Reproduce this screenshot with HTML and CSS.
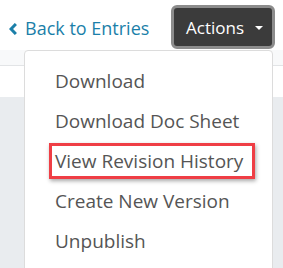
FILE: index.html
```html
<!DOCTYPE html>
<html lang="en">
  <head>
    <meta charset="UTF-8" />
    <meta name="viewport" content="width=device-width, initial-scale=1.0" />
    <title>Entry Actions</title>
    <link rel="stylesheet" href="styles.css">
  </head>
  <body>
    <header class="toolbar">
      <a href="#" class="back-link">
        <svg class="chevron" width="8" height="12" viewBox="0 0 8 12"><path d="M6.9 1 L2 6 L6.9 11" fill="none" stroke="currentColor" stroke-width="3"/></svg>
        Back to Entries
      </a>
      <div class="dropdown">
        <button class="actions-btn">Actions <span class="caret"></span></button>
        <ul class="menu">
          <li><a href="#">Download</a></li>
          <li><a href="#">Download Doc Sheet</a></li>
          <li><a href="#" class="highlight">View Revision History</a></li>
          <li><a href="#">Create New Version</a></li>
          <li><a href="#">Unpublish</a></li>
        </ul>
      </div>
    </header>

    <main>
      <div class="card-head"></div>
      <div class="card-body"></div>
      <div class="content"></div>
    </main>
  </body>
</html>
```

FILE: styles.css
```css
* {
  margin: 0;
  padding: 0;
  box-sizing: border-box;
}

body {
  font-family: "Open Sans", "Noto Sans", sans-serif;
  background-color: #fff;
  color: #555;
  height: 268px;
  overflow: hidden;
}

.toolbar {
  display: flex;
  justify-content: space-between;
  align-items: flex-start;
  height: 50px;
  padding: 5px 8px 0 9px;
}

.back-link {
  display: flex;
  align-items: center;
  gap: 8px;
  margin-top: 11px;
  font-size: 18px;
  color: #1b7fa9;
  text-decoration: none;
}

.chevron {
  margin-top: 1px;
}

.dropdown {
  position: relative;
}

.actions-btn {
  display: flex;
  align-items: center;
  gap: 11px;
  width: 104px;
  height: 44px;
  padding: 0 0 0 12px;
  font-family: inherit;
  font-size: 17px;
  color: #fff;
  background-color: #3b3b3b;
  border: 3px solid #8c8c8c;
  border-radius: 6px;
}

.caret {
  width: 0;
  height: 0;
  margin-top: 1px;
  border-left: 4px solid transparent;
  border-right: 4px solid transparent;
  border-top: 4px solid #fff;
}

.menu {
  position: absolute;
  top: 45px;
  right: 2px;
  width: 249px;
  height: 230px;
  list-style: none;
  background-color: #fff;
  border: 1px solid #dcdcdc;
  border-radius: 4px;
  padding-top: 12px;
  z-index: 10;
}

.menu a {
  display: block;
  margin: 0 17px 4px 24px;
  padding: 0 3px;
  height: 36px;
  line-height: 30px;
  font-size: 19px;
  color: #555;
  text-decoration: none;
  border: 3px solid transparent;
}

.menu a.highlight {
  border-color: #ef3e45;
  box-shadow: 1px 2px 4px rgba(0, 0, 0, 0.35);
}

.card-head {
  height: 16px;
  background-color: #f8f9fa;
  border-bottom: 1px solid #e2e4e6;
}

.card-body {
  height: 31px;
  background-color: #fff;
}

.content {
  height: 171px;
  background-color: #e9ecef;
}
```
